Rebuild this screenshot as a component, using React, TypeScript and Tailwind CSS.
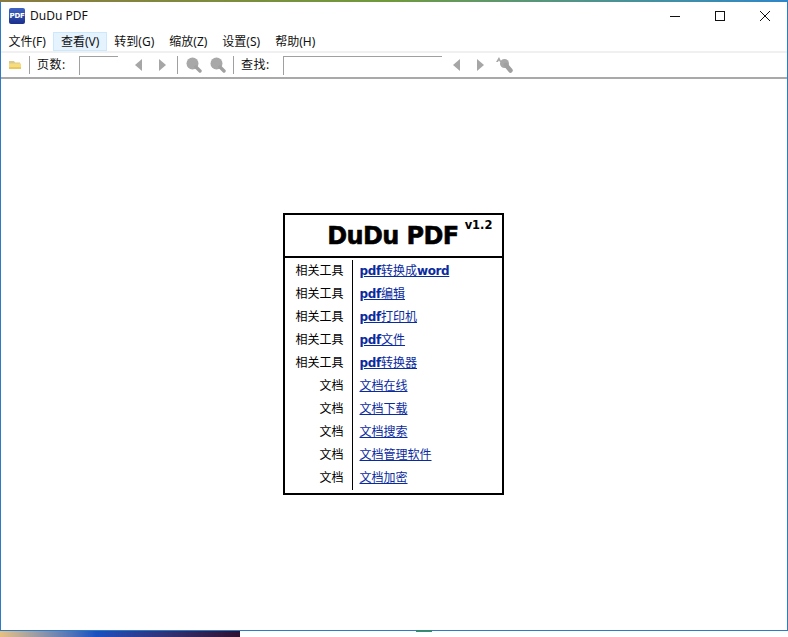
const uiFont = "font-['Noto_Sans','Noto_Sans_CJK_SC',sans-serif]";

const menus = ["文件(F)", "查看(V)", "转到(G)", "缩放(Z)", "设置(S)", "帮助(H)"];

const rows = [
  { side: "相关工具", pre: "pdf", link: "转换成", post: "word" },
  { side: "相关工具", pre: "pdf", link: "编辑" },
  { side: "相关工具", pre: "pdf", link: "打印机" },
  { side: "相关工具", pre: "pdf", link: "文件" },
  { side: "相关工具", pre: "pdf", link: "转换器" },
  { side: "文档", link: "文档在线" },
  { side: "文档", link: "文档下载" },
  { side: "文档", link: "文档搜索" },
  { side: "文档", link: "文档管理软件" },
  { side: "文档", link: "文档加密" },
];

function AppIcon() {
  return (
    <div className="w-4 h-4 rounded-[2px] bg-gradient-to-b from-[#3f63c4] to-[#1c2f8c] flex items-center justify-center">
      <span className="text-white text-[7px] leading-none font-bold font-['DejaVu_Sans',sans-serif] tracking-[-0.3px]">
        PDF
      </span>
    </div>
  );
}

function Divider() {
  return <div className="w-px h-[18px] bg-[#a0a0a0]" />;
}

function Folder() {
  return (
    <svg width="12" height="10" viewBox="0 0 12 10">
      <path d="M0 1h5l1 1.500h5V4H0z" fill="#d9c98a" />
      <path d="M0 3.500h12V9H0z" fill="#f6dc7c" />
      <path d="M0 7h12v2H0z" fill="#e9c95c" />
    </svg>
  );
}

function Arrow({ dir }: { dir: "left" | "right" }) {
  return (
    <svg width="8" height="12" viewBox="0 0 8 12">
      <path d={dir === "left" ? "M7 0v12L0 6z" : "M1 0v12l7-6z"} fill="#a6a6a6" />
    </svg>
  );
}

function Magnifier() {
  return (
    <svg width="16" height="16" viewBox="0 0 16 16">
      <circle cx="6.500" cy="6.500" r="6" fill="#a8a8a8" />
      <path d="M10 10l4 4" stroke="#a0a0a0" strokeWidth="3.400" strokeLinecap="round" />
    </svg>
  );
}

function FindIcon() {
  return (
    <svg width="17" height="16" viewBox="0 0 17 16">
      <path d="M0 5L3 0l2.500 5H4L3 3.500 1.800 5z" fill="#a8a8a8" />
      <circle cx="8.500" cy="6.500" r="4.500" fill="#a8a8a8" />
      <path d="M10 8l4.500 5.500" stroke="#a0a0a0" strokeWidth="4.500" strokeLinecap="round" />
    </svg>
  );
}

function Field({ className }: { className: string }) {
  return <div className={`h-[19px] bg-white border-t border-l border-[#a0a0a0] ${className}`} />;
}

function WindowButtons() {
  return (
    <div className="flex items-center">
      <div className="w-[45px] flex justify-center">
        <svg width="10" height="10" viewBox="0 0 10 10">
          <path d="M0 5.500h10" stroke="#111" strokeWidth="1" />
        </svg>
      </div>
      <div className="w-[45px] flex justify-center">
        <svg width="10" height="10" viewBox="0 0 10 10">
          <rect x="0.500" y="0.500" width="9" height="9" fill="none" stroke="#111" strokeWidth="1" />
        </svg>
      </div>
      <div className="w-[45px] flex justify-center">
        <svg width="10" height="10" viewBox="0 0 10 10">
          <path d="M0 0l10 10M10 0L0 10" stroke="#111" strokeWidth="1" />
        </svg>
      </div>
    </div>
  );
}

export default function App() {
  return (
    <div className="w-[788px] h-[637px] flex flex-col overflow-hidden bg-white">
      {/* wallpaper peeking out on top */}
      <div className="h-[2px] shrink-0 bg-gradient-to-r from-[#8a7a40] via-[#6f9a3c] to-[#2f86c8]" />

      <div className={`flex-1 min-h-0 flex flex-col border-l border-r border-b border-[#2b7cc4] text-[#111] ${uiFont}`}>
        {/* Title bar */}
        <div className="h-[30px] shrink-0 flex items-center justify-between pl-[8px] pb-[2px]">
          <div className="flex items-center gap-[5px]">
            <AppIcon />
            <span className="text-[12px] leading-none">DuDu PDF</span>
          </div>
          <WindowButtons />
        </div>

        {/* Menu bar */}
        <div className="h-[19px] shrink-0 flex items-stretch">
          {menus.map((m) => (
            <div
              key={m}
              className={`px-[6.500px] flex items-center text-[12px] leading-none border ${
                m === "查看(V)" ? "bg-[#e5f3ff] border-[#cce8ff]" : "border-transparent"
              }`}
            >
              {m}
            </div>
          ))}
        </div>

        {/* Toolbar */}
        <div className="h-[28px] shrink-0 flex items-center border-t-2 border-[#f0f0f0] border-b-2 border-b-[#a9a9a9]">
          <div className="w-[28px] flex justify-center">
            <Folder />
          </div>
          <Divider />
          <span className="text-[12px] leading-none ml-[7px] w-[42px] tracking-[0.5px]">页数:</span>
          <Field className="w-[39px]" />
          <div className="ml-[17px] flex items-center gap-[15px]">
            <Arrow dir="left" />
            <Arrow dir="right" />
          </div>
          <div className="ml-[11px]">
            <Divider />
          </div>
          <div className="ml-[8px] flex items-center gap-[8px]">
            <Magnifier />
            <Magnifier />
          </div>
          <div className="ml-[7px]">
            <Divider />
          </div>
          <span className="text-[12px] leading-none ml-[7px] w-[42px] tracking-[0.5px]">查找:</span>
          <Field className="w-[159px]" />
          <div className="ml-[11px] flex items-center gap-[15px]">
            <Arrow dir="left" />
            <Arrow dir="right" />
          </div>
          <div className="ml-[12px]">
            <FindIcon />
          </div>
        </div>

        {/* Document page */}
        <div className="flex-1 min-h-0 flex items-center justify-center pb-[1px] pr-[2px]">
          <div className="w-[221px] h-[282px] border-2 border-black text-black">
            <div className="h-[43px] border-b-2 border-black flex justify-end pr-[9px] font-['DejaVu_Sans',sans-serif] font-bold">
              <span className="text-[24px] leading-[42px] tracking-[-0.6px] [-webkit-text-stroke:0.5px_black]">DuDu PDF</span>
              <span className="text-[11.500px] leading-none ml-[6px] mt-[5px]">v1.2</span>
            </div>
            <div className="pt-[2px]">
              {rows.map((r, i) => (
                <div key={i} className="h-[23px] flex text-[12px] leading-[19px]">
                  <div className="w-[68px] text-right pr-[8px] border-r border-black font-['Noto_Sans_CJK_SC',sans-serif]">
                    {r.side}
                  </div>
                  <a className="pl-[7px] text-[#0a2aa0] underline font-['Noto_Sans_CJK_SC',sans-serif]">
                    {r.pre && <b className="font-['DejaVu_Sans',sans-serif] tracking-[-0.3px]">{r.pre}</b>}
                    {r.link}
                    {r.post && <b className="font-['DejaVu_Sans',sans-serif] tracking-[-0.4px]">{r.post}</b>}
                  </a>
                </div>
              ))}
            </div>
          </div>
        </div>
      </div>

      {/* wallpaper peeking out below */}
      <div className="h-[6px] shrink-0 flex items-start bg-white">
        <div className="w-[240px] h-full bg-gradient-to-r from-[#e8c080] via-[#1a50c0] via-40% to-[#301030]" />
        <div className="ml-[176px] w-[16px] h-px bg-[#3f9a20]" />
      </div>
    </div>
  );
}
